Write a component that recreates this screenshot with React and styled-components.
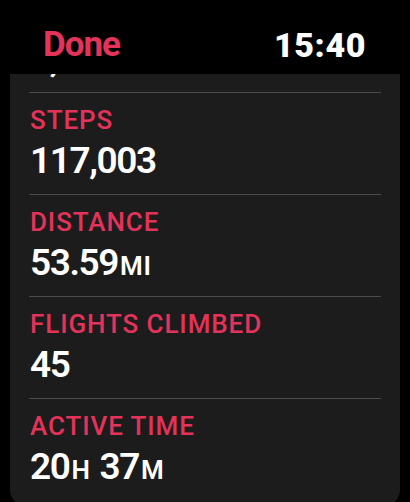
import React from 'react'
import styled, { createGlobalStyle } from 'styled-components'

const GlobalStyle = createGlobalStyle`
  html, body {
    margin: 0;
    padding: 0;
    height: 100%;
    background: #000;
    overflow: hidden;
  }
  #root { height: 100%; }
`

const Screen = styled.div`
  width: 410px;
  height: 502px;
  display: flex;
  flex-direction: column;
  background: #000;
  font-family: Roboto, "Liberation Sans", sans-serif;
  -webkit-font-smoothing: antialiased;
`

const TopBar = styled.header`
  flex: none;
  height: 74px;
  box-sizing: border-box;
  padding: 25px 44px 0 43px;
  display: flex;
  align-items: flex-start;
  justify-content: space-between;
`

const DoneButton = styled.button`
  background: none;
  border: 0;
  padding: 0;
  font-family: inherit;
  font-size: 35px;
  line-height: 40px;
  font-weight: 700;
  letter-spacing: -1px;
  color: #e3335a;
`

const Clock = styled.div`
  font-size: 34px;
  line-height: 40px;
  font-weight: 900;
  letter-spacing: 0.6px;
  color: #fff;
`

const Viewport = styled.main`
  flex: 1;
  overflow: hidden;
  padding: 0 10px;
`

const Card = styled.section`
  margin-top: ${p => -p.$scroll}px;
  padding-bottom: 6px;
  background: #1c1c1c;
  border-radius: 16px;
`

const Row = styled.div`
  padding: 12px 20px 13px;
`

const Label = styled.div`
  font-size: 26px;
  line-height: 30px;
  font-weight: 500;
  letter-spacing: 0.9px;
  color: #e3335a;
  text-transform: uppercase;
`

const Value = styled.div`
  margin-top: 6px;
  height: 40px;
  font-size: 37px;
  line-height: 40px;
  font-weight: 600;
  letter-spacing: -1.4px;
  color: #fff;
`

const Unit = styled.span`
  font-size: 26px;
  line-height: 0;
  letter-spacing: 0.6px;
  text-transform: uppercase;
  margin-left: 2px;
  margin-right: ${p => (p.$gap ? '9px' : '0')};
`

const Divider = styled.hr`
  margin: 0 19px;
  border: 0;
  height: 1px;
  background: #4a4a4a;
`

const stats = [
  { label: 'Active Calories', value: [['1,046', 'cal']] },
  { label: 'Steps', value: [['117,003']] },
  { label: 'Distance', value: [['53.59', 'mi']] },
  { label: 'Flights Climbed', value: [['45']] },
  { label: 'Active Time', value: [['20', 'h'], ['37', 'm']] },
]

export default function App() {
  return (
    <>
      <GlobalStyle />
      <Screen>
        <TopBar>
          <DoneButton>Done</DoneButton>
          <Clock>15:40</Clock>
        </TopBar>
        <Viewport>
          <Card $scroll={83}>
            {stats.map((s, i) => (
              <React.Fragment key={s.label}>
                {i > 0 && <Divider />}
                <Row>
                  <Label>{s.label}</Label>
                  <Value>
                    {s.value.map(([num, unit], j) => (
                      <React.Fragment key={j}>
                        {num}
                        {unit && <Unit $gap={j < s.value.length - 1}>{unit}</Unit>}
                      </React.Fragment>
                    ))}
                  </Value>
                </Row>
              </React.Fragment>
            ))}
          </Card>
        </Viewport>
      </Screen>
    </>
  )
}
